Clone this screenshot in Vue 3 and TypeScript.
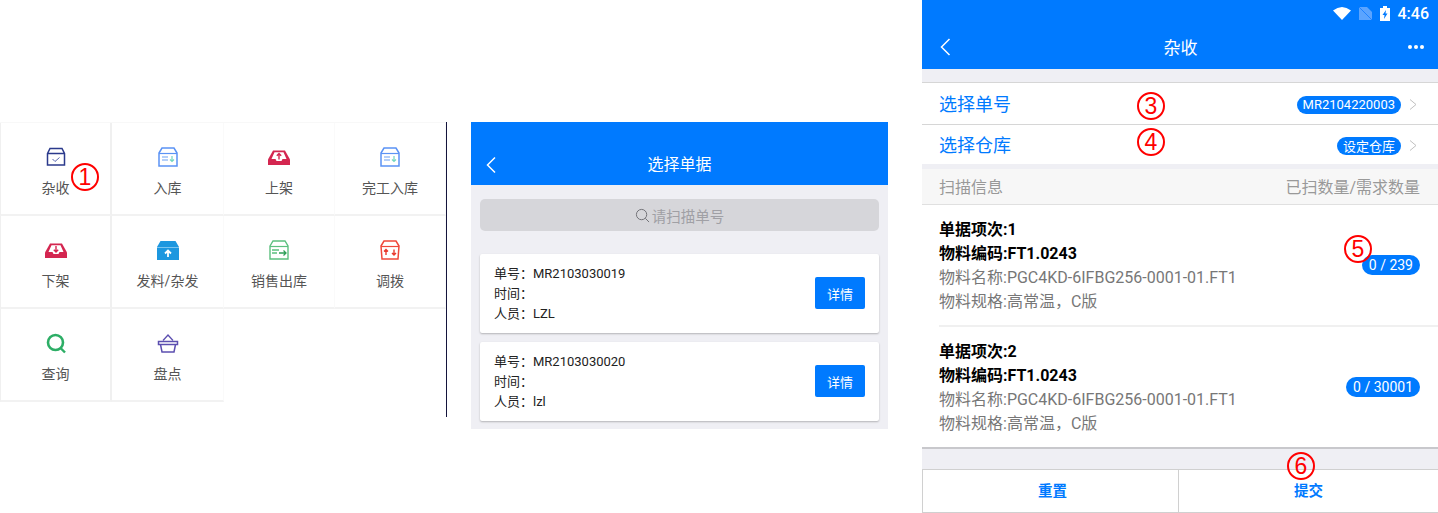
<script setup lang="ts">
interface MenuItem {
  label: string
  icon: string
}

interface OrderCard {
  no: string
  person: string
}

interface ScanItem {
  index: number
  count: string
}

const menus: MenuItem[] = [
  { label: '杂收', icon: 'check' },
  { label: '入库', icon: 'in' },
  { label: '上架', icon: 'up' },
  { label: '完工入库', icon: 'in' },
  { label: '下架', icon: 'down' },
  { label: '发料/杂发', icon: 'issue' },
  { label: '销售出库', icon: 'sale' },
  { label: '调拨', icon: 'move' },
  { label: '查询', icon: 'search' },
  { label: '盘点', icon: 'basket' }
]

const orders: OrderCard[] = [
  { no: 'MR2103030019', person: 'LZL' },
  { no: 'MR2103030020', person: 'lzl' }
]

const scanItems: ScanItem[] = [
  { index: 1, count: '0 / 239' },
  { index: 2, count: '0 / 30001' }
]
</script>

<template>
  <div class="page">
    <section class="menu-panel">
      <div class="menu-grid">
        <div v-for="item in menus" :key="item.label" class="menu-cell">
          <svg class="menu-icon" viewBox="0 0 24 24" width="24" height="24">
            <template v-if="item.icon === 'check'">
              <path d="M3.500 8.500 6 3.500h12l2.500 5v11.500h-17zM3.500 8.500h17" fill="none" stroke="#2b3a8c" stroke-width="1.500" />
              <path d="M8.500 14l2.500 2.500 4.500-4" fill="none" stroke="#5a68b0" stroke-width="1" />
            </template>
            <template v-else-if="item.icon === 'in'">
              <path d="M3 8 6 3h12l3 5v13H3z" fill="none" stroke="#5b93f5" stroke-width="1.500" />
              <path d="M3 8.500h18" stroke="#5b93f5" stroke-width="1.200" />
              <path d="M6 12h6M6 15h6" stroke="#9cc0f8" stroke-width="1.300" />
              <path d="M16 11v5M14 14.500l2 2 2-2" fill="none" stroke="#74d6c0" stroke-width="1.200" />
            </template>
            <template v-else-if="item.icon === 'up'">
              <path d="M1 14.500 6 5.500h12l5 9v5.500H1z" fill="#d42650" />
              <path d="M4.500 14 7.500 7.200h9l3 6.800h-4l-1 2h-5l-1-2z" fill="#fff" />
              <path d="M12 8.500v6M9.800 10.800 12 8.600l2.200 2.200" fill="none" stroke="#d42650" stroke-width="1.400" />
            </template>
            <template v-else-if="item.icon === 'down'">
              <path d="M1 14.500 6 5.500h12l5 9v5.500H1z" fill="#d42650" />
              <path d="M4.500 14 7.500 7.200h9l3 6.800h-4l-1 2h-5l-1-2z" fill="#fff" />
              <path d="M12 8v6M9.800 11.800 12 14l2.200-2.200" fill="none" stroke="#d42650" stroke-width="1.400" />
            </template>
            <template v-else-if="item.icon === 'issue'">
              <path d="M1 9 4.500 3h15L23 9v13H1z" fill="#1d97df" />
              <path d="M1 9.500h22" stroke="#7cc5ef" stroke-width="1" />
              <path d="M12 19v-6M9 15.500l3-3 3 3" fill="none" stroke="#fff" stroke-width="1.800" />
            </template>
            <template v-else-if="item.icon === 'sale'">
              <path d="M3 8 6 3h12l3 5v13H3z" fill="none" stroke="#5cc07f" stroke-width="1.400" />
              <path d="M3 8.500h18" stroke="#5cc07f" stroke-width="1.200" />
              <path d="M5 12h7M5 15h5" stroke="#5cc07f" stroke-width="1.300" />
              <path d="M12 15h7M16.500 12.500 19 15l-2.500 2.500" fill="none" stroke="#2e9e58" stroke-width="1.300" />
            </template>
            <template v-else-if="item.icon === 'move'">
              <path d="M3 8 6 3h12l3 5-1 13H4z" fill="none" stroke="#f0483a" stroke-width="1.500" />
              <path d="M3 8.500h18" stroke="#f0483a" stroke-width="1.200" />
              <path d="M8 17v-5.500M6 13.500l2-2 2 2M16 11.500V17M14 15l2 2 2-2" fill="none" stroke="#e83a2e" stroke-width="1.400" />
            </template>
            <template v-else-if="item.icon === 'search'">
              <circle cx="11.500" cy="11.500" r="7.500" fill="none" stroke="#2dae66" stroke-width="2.600" />
              <path d="M16.500 17l4.500 4.500" stroke="#2dae66" stroke-width="2.400" />
            </template>
            <template v-else>
              <path d="M2.500 10.500h19v3h-19z" fill="none" stroke="#5c4fb0" stroke-width="1.500" />
              <path d="M4.500 13.500l1.500 7.500h12l1.500-7.500" fill="none" stroke="#5c4fb0" stroke-width="1.500" />
              <path d="M7 9.500 12 4l5 5.500" fill="none" stroke="#5c4fb0" stroke-width="1.300" />
            </template>
          </svg>
          <span class="menu-label">{{ item.label }}</span>
        </div>
      </div>
    </section>

    <section class="order-panel">
      <header class="order-head">
        <svg class="back" viewBox="0 0 12 18" width="12" height="18">
          <path d="M10 1.500 2.500 9l7.500 7.500" fill="none" stroke="#fff" stroke-width="1.500" />
        </svg>
        <span>选择单据</span>
      </header>
      <div class="search-box">
        <svg viewBox="0 0 16 16" width="15" height="15">
          <circle cx="7" cy="7" r="5.500" fill="none" stroke="#6d6d72" stroke-width="1" />
          <path d="M11 11l4 4" stroke="#6d6d72" stroke-width="1" />
        </svg>
        <span>请扫描单号</span>
      </div>
      <div v-for="order in orders" :key="order.no" class="order-card">
        <div class="order-info">
          <div>单号：{{ order.no }}</div>
          <div>时间：</div>
          <div>人员：{{ order.person }}</div>
        </div>
        <button class="detail-btn">详情</button>
      </div>
    </section>

    <section class="scan-panel">
      <div class="status-bar">
        <svg viewBox="0 0 18 13" width="18" height="13">
          <path d="M0 3.500Q9-3.500 18 3.500L9 13z" fill="#fff" />
        </svg>
        <svg viewBox="0 0 13 13" width="13" height="13">
          <path d="M0 0h8l5 5v8H0z" fill="#5ba4ff" />
          <path d="M0 0l13 13" stroke="#1f82ff" stroke-width="1" />
        </svg>
        <svg viewBox="0 0 10 15" width="10" height="15">
          <path d="M3 0h4v2h3v13H0V2h3z" fill="#fff" />
          <path d="M6 4 2.500 9h2L4 13l3.500-5.500h-2z" fill="#007aff" />
        </svg>
        <span class="clock">4:46</span>
      </div>
      <header class="scan-head">
        <svg viewBox="0 0 12 18" width="12" height="18">
          <path d="M10.500 1 2.500 9l8 8" fill="none" stroke="#fff" stroke-width="1.500" />
        </svg>
        <span class="scan-title">杂收</span>
        <span class="dots"><i></i><i></i><i></i></span>
      </header>

      <div class="pick-group">
        <div class="pick-row">
          <span class="pick-name">选择单号</span>
          <span class="pill">MR2104220003</span>
          <svg class="arrow" viewBox="0 0 8 11" width="8" height="11">
            <path d="M1 .5l6 5-6 5" fill="none" stroke="#c0c0c0" stroke-width="1" />
          </svg>
        </div>
        <div class="pick-row second">
          <span class="pick-name">选择仓库</span>
          <span class="pill">设定仓库</span>
          <svg class="arrow" viewBox="0 0 8 11" width="8" height="11">
            <path d="M1 .5l6 5-6 5" fill="none" stroke="#c0c0c0" stroke-width="1" />
          </svg>
        </div>
      </div>

      <div class="scan-caption">
        <span>扫描信息</span>
        <span>已扫数量/需求数量</span>
      </div>

      <div class="scan-list">
        <div v-for="row in scanItems" :key="row.index" class="scan-item">
          <div class="scan-text">
            <div class="strong">单据项次:{{ row.index }}</div>
            <div class="strong">物料编码:FT1.0243</div>
            <div>物料名称:PGC4KD-6IFBG256-0001-01.FT1</div>
            <div>物料规格:高常温，C版</div>
          </div>
          <span class="count">{{ row.count }}</span>
        </div>
      </div>

      <footer class="scan-foot">
        <button>重置</button>
        <button>提交</button>
      </footer>
    </section>

    <span class="mark mark-1">1</span>
    <span class="mark mark-3">3</span>
    <span class="mark mark-4">4</span>
    <span class="mark mark-5">5</span>
    <span class="mark mark-6">6</span>
  </div>
</template>

<style>
html,
body {
  margin: 0;
  background: #fff;
}
</style>

<style scoped>
.page {
  position: relative;
  width: 1438px;
  height: 513px;
  overflow: hidden;
  display: flex;
  align-items: flex-start;
  background: #fff;
  font-family: Roboto, "Noto Sans CJK SC", sans-serif;
}

/* menu */
.menu-panel {
  width: 446px;
  height: 295px;
  margin-top: 122px;
  border-right: 1px solid #14143c;
  flex-shrink: 0;
}

.menu-grid {
  display: grid;
  grid-template-columns: 112px 112px 111px 111px;
  grid-auto-rows: 93px;
  border-top: 1px solid #f8f8f8;
}

.menu-cell {
  box-sizing: border-box;
  display: flex;
  flex-direction: column;
  align-items: center;
  padding-top: 22px;
  border-right: 1px solid #fafafa;
  border-bottom: 2px solid #f2f2f2;
}

.menu-cell:nth-child(4n + 1) {
  border-left: 1px solid #f0f0f0;
  border-right: 2px solid #f0f0f0;
}

.menu-icon {
  margin-bottom: 10px;
}

.menu-label {
  font-size: 14px;
  line-height: 18px;
  color: #555;
}

/* order list */
.order-panel {
  width: 417px;
  height: 307px;
  margin-top: 122px;
  margin-left: 24px;
  flex-shrink: 0;
  background: #efeff4;
}

.order-head {
  position: relative;
  height: 63px;
  box-sizing: border-box;
  padding-top: 33px;
  text-align: center;
  background: #007aff;
  color: #fff;
  font-size: 16px;
  line-height: 20px;
}

.back {
  position: absolute;
  left: 14px;
  top: 34px;
}

.search-box {
  height: 32px;
  margin: 14px 9px 23px;
  display: flex;
  align-items: center;
  justify-content: center;
  gap: 2px;
  border-radius: 5px;
  background: #d6d6da;
  color: #a0a0a5;
  font-size: 14.5px;
}

.order-card {
  height: 79px;
  box-sizing: border-box;
  margin: 0 9px 9px;
  padding: 0 14px;
  display: flex;
  align-items: center;
  justify-content: space-between;
  background: #fff;
  border-radius: 2px;
  box-shadow: 0 1px 2px rgba(0, 0, 0, 0.25);
}

.order-info {
  font-size: 13px;
  line-height: 20px;
  color: #222;
}

.detail-btn {
  width: 50px;
  height: 32px;
  margin-bottom: 1px;
  border: 0;
  border-radius: 2px;
  background: #007aff;
  color: #fff;
  font-family: inherit;
  font-size: 13px;
  padding: 0;
}

/* scan page */
.scan-panel {
  width: 516px;
  height: 513px;
  margin-left: 34px;
  flex-shrink: 0;
  background: #efeff4;
}

.status-bar {
  height: 25px;
  box-sizing: border-box;
  padding: 1px 9px 0 0;
  display: flex;
  justify-content: flex-end;
  align-items: center;
  gap: 8px;
  background: #007aff;
}

.clock {
  color: #fff;
  font-size: 16px;
  font-weight: 500;
}

.scan-head {
  height: 44px;
  box-sizing: border-box;
  padding: 0 14px 0 17px;
  display: flex;
  align-items: center;
  justify-content: space-between;
  background: #007aff;
  color: #fff;
}

.scan-title {
  margin: -2px 0 0 2px;
  font-size: 17px;
}

.dots {
  display: flex;
  gap: 2px;
  margin-top: -1px;
}

.dots i {
  width: 4px;
  height: 4px;
  border-radius: 50%;
  background: #fff;
}

.pick-group {
  margin-top: 13px;
  margin-bottom: 5px;
  border-top: 1px solid #d6d6d6;
  background: #fff;
}

.pick-row {
  height: 41px;
  box-sizing: border-box;
  padding: 2px 21px 0 17px;
  display: flex;
  align-items: center;
  gap: 8px;
}

.pick-row.second {
  height: 40px;
  padding-top: 2px;
  border-top: 1px solid #d6d6d6;
}

.pick-name {
  margin-top: -3px;
  margin-right: auto;
  color: #007aff;
  font-size: 18px;
}

.pill {
  height: 18px;
  padding: 0 6px;
  display: inline-flex;
  align-items: center;
  border-radius: 9px;
  background: #007aff;
  color: #fff;
  font-size: 13px;
}

.scan-caption {
  height: 36px;
  box-sizing: border-box;
  padding: 0 18px 2px 17px;
  display: flex;
  align-items: center;
  justify-content: space-between;
  background: #f7f7f7;
  border-bottom: 1px solid #e0e0e0;
  color: #999;
  font-size: 16px;
}

.scan-list {
  padding-left: 17px;
  background: #fff;
  border-bottom: 2px solid #c8c8cc;
}

.scan-item {
  height: 120px;
  padding-right: 18px;
  display: flex;
  align-items: center;
  justify-content: space-between;
  color: #777;
  font-size: 16px;
  line-height: 24px;
}

.scan-item:first-child {
  border-bottom: 2px solid #f0f0f0;
}

.scan-text {
  margin-top: 2px;
}

.strong {
  color: #000;
  font-weight: 700;
}

.count {
  height: 20px;
  padding: 0 7px;
  display: inline-flex;
  align-items: center;
  border-radius: 10px;
  background: #007aff;
  color: #fff;
  font-size: 14px;
}

.scan-foot {
  margin-top: 20px;
  height: 44px;
  box-sizing: border-box;
  display: flex;
  background: #fff;
  border: 1px solid #d0d0d0;
  border-right: 0;
}

.scan-foot button {
  border: 0;
  background: #fff;
  color: #007aff;
  font-family: inherit;
  font-size: 14.5px;
  font-weight: 700;
  padding: 0 0 4px;
}

.scan-foot button:first-child {
  width: 255px;
  padding-left: 4px;
}

.scan-foot button + button {
  flex: 1;
  border-left: 1px solid #d0d0d0;
}

/* circled numbers laid over the screens */
.mark {
  position: absolute;
  box-sizing: border-box;
  width: 28px;
  height: 28px;
  display: flex;
  align-items: center;
  justify-content: center;
  border: 2px solid #f00;
  border-radius: 50%;
  color: #f00;
  font-family: "Liberation Sans", sans-serif;
  font-size: 23px;
}

.mark-1 { left: 71px; top: 163px; }
.mark-3 { left: 1137px; top: 92px; }
.mark-4 { left: 1137px; top: 128px; }
.mark-5 { left: 1344px; top: 235px; }
.mark-6 { left: 1287px; top: 452px; }
</style>
